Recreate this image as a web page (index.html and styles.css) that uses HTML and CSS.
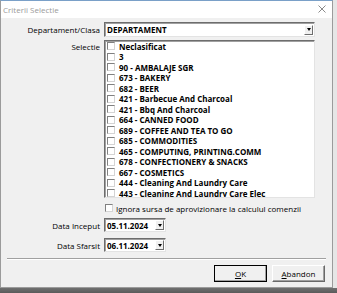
FILE: index.html
```html
<!DOCTYPE html>
<html>
<head>
<meta charset="utf-8">
<link rel="stylesheet" href="styles.css">
</head>
<body>
<div class="screen">
  <div class="window">
    <div class="titlebar">
      <span class="title">Criterii Selectie</span>
      <svg class="close" width="8" height="8" viewBox="0 0 8 8"><path d="M0.5 0.5L7.5 7.5M7.5 0.5L0.5 7.5" stroke="#8a8a8a" stroke-width="1" fill="none"/></svg>
    </div>
    <div class="client">
      <div class="row r-dep">
        <span class="label">Departament/Clasa</span>
        <div class="combo wide"><span class="val">DEPARTAMENT</span><span class="dd"><i></i></span></div>
      </div>
      <div class="row r-list">
        <span class="label top">Selectie</span>
        <div class="list">
          <div class="item"><span class="cb"></span>Neclasificat</div>
          <div class="item"><span class="cb"></span>3</div>
          <div class="item"><span class="cb"></span>90 - AMBALAJE SGR</div>
          <div class="item"><span class="cb"></span>673 - BAKERY</div>
          <div class="item"><span class="cb"></span>682 - BEER</div>
          <div class="item"><span class="cb"></span>421 - Barbecue And Charcoal</div>
          <div class="item"><span class="cb"></span>421 - Bbq And Charcoal</div>
          <div class="item"><span class="cb"></span>664 - CANNED FOOD</div>
          <div class="item"><span class="cb"></span>689 - COFFEE AND TEA TO GO</div>
          <div class="item"><span class="cb"></span>685 - COMMODITIES</div>
          <div class="item"><span class="cb"></span>465 - COMPUTING, PRINTING.COMM</div>
          <div class="item"><span class="cb"></span>678 - CONFECTIONERY &amp; SNACKS</div>
          <div class="item"><span class="cb"></span>667 - COSMETICS</div>
          <div class="item"><span class="cb"></span>444 - Cleaning And Laundry Care</div>
          <div class="item"><span class="cb"></span>443 - Cleaning And Laundry Care Elec</div>
        </div>
      </div>
      <div class="row r-check">
        <span class="label"></span>
        <span class="cb"></span><span class="ctext">Ignora sursa de aprovizionare la calculul comenzii</span>
      </div>
      <div class="row r-d1">
        <span class="label">Data Inceput</span>
        <div class="combo date"><span class="val">05.11.2024</span><span class="dd"><i></i></span></div>
      </div>
      <div class="row r-d2">
        <span class="label">Data Sfarsit</span>
        <div class="combo date"><span class="val">06.11.2024</span><span class="dd"><i></i></span></div>
      </div>
      <div class="sep"></div>
      <div class="buttons">
        <div class="btn default"><u>O</u>K</div>
        <div class="btn"><u>A</u>bandon</div>
      </div>
    </div>
  </div>
  <div class="side"></div>
  <div class="shadow"></div>
</div>
</body>
</html>
```
FILE: styles.css
```css
* { box-sizing: border-box; }
html, body { margin: 0; padding: 0; }
body {
  width: 337px; height: 293px; overflow: hidden;
  background: #6a6a6a;
  font-family: "Open Sans", "Noto Sans", sans-serif;
  font-size: 8px;
  color: #000;
}
.screen { position: relative; width: 337px; height: 293px; display: grid; grid-template-columns: 333px 4px; grid-template-rows: 288px 5px; }
.side { background: #e6e6e6; grid-column: 2; grid-row: 1; }
.shadow { grid-column: 1 / 3; grid-row: 2; background: linear-gradient(#707070, #5a5a5a); }
.window {
  grid-column: 1; grid-row: 1;
  background: #f0f0f0;
  border: 1px solid #9b9b9b;
  border-top-color: #7aa0c8;
  display: flex; flex-direction: column;
}
.titlebar {
  height: 17px; background: #fff;
  display: flex; align-items: center; justify-content: space-between;
  padding: 0 6px 0 2px;
}
.title { color: #9a9a9a; font-size: 8px; margin-top: -1px; }
.close { margin-top: -2px; }
.client { display: flex; flex-direction: column; padding-top: 4px; }
.row { display: flex; align-items: center; }
.label { width: 100px; padding-right: 1px; text-align: right; flex: none; margin-right: 3px; }
.label.top { align-self: flex-start; padding-top: 1px; }
.combo {
  height: 15px; background: #fff;
  border: 1px solid; border-color: #6d6d6d #e3e3e3 #e3e3e3 #6d6d6d;
  box-shadow: inset 1px 1px 0 #a0a0a0;
  display: flex; align-items: center; justify-content: space-between;
  font-weight: bold; padding-left: 2px; padding-right: 1px;
}
.combo.wide { width: 211px; }
.combo.date { width: 62px; height: 14px; }
.r-d1 { margin-top: 6px; }
.r-d2 { margin-top: 6px; }
.dd {
  width: 9px; height: 10px; background: #f0f0f0;
  border: 1px solid; border-color: #fff #6d6d6d #6d6d6d #fff;
  display: flex; align-items: center; justify-content: center;
}
.dd i { width: 0; height: 0; border-left: 2.5px solid transparent; border-right: 2.5px solid transparent; border-top: 3px solid #000; }
.r-list { margin-top: 3px; }
.list {
  width: 211px; height: 158px; background: #fff; overflow: hidden;
  border: 1px solid; border-color: #6d6d6d #e3e3e3 #e3e3e3 #6d6d6d;
  box-shadow: inset 1px 1px 0 #a0a0a0;
  padding: 0 0 0 2px;
}
.item { height: 10.5px; display: flex; align-items: center; font-weight: bold; white-space: nowrap; }
.cb {
  width: 8px; height: 8px; flex: none; background: #fff;
  border: 1px solid; border-color: #808080 #d4d4d4 #d4d4d4 #808080;
  margin-right: 4px;
}
.r-check { margin-top: 6px; height: 8px; }
.r-check .cb { margin-left: 1px; margin-right: 3px; }
.ctext { white-space: nowrap; }
.sep { margin: 6px 6px 0 6px; height: 2px; border-top: 1px solid #a0a0a0; border-bottom: 1px solid #fff; }
.buttons { display: flex; justify-content: flex-end; gap: 5px; margin-top: 5px; padding-right: 7px; }
.btn {
  width: 53px; height: 17px; background: #f0f0f0;
  border: 1px solid; border-color: #fff #696969 #696969 #fff;
  box-shadow: inset -1px -1px 0 #a0a0a0;
  display: flex; align-items: center; justify-content: center;
}
.btn.default { outline: 1px solid #000; outline-offset: -1px; border-color: #fff #696969 #696969 #fff; }
u { text-decoration: underline; text-underline-offset: 1px; }
```
